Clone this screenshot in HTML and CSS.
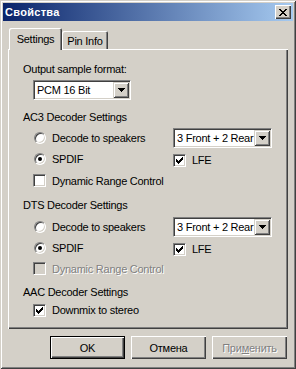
FILE: index.html
```html
<!DOCTYPE html>
<html lang="ru">
<head>
<meta charset="UTF-8">
<meta name="viewport" content="width=device-width, initial-scale=1.0">
<title>Свойства</title>
<link rel="stylesheet" href="styles.css">
</head>
<body>
<div class="window">
  <div class="titlebar">
    <span class="title">Свойства</span>
    <span class="close-btn">
      <svg width="8" height="7" viewBox="0 0 8 7" shape-rendering="crispEdges"><path fill="#000" d="M0 0h2v1H0zM6 0h2v1H6zM1 1h2v1H1zM5 1h2v1H5zM2 2h4v1H2zM3 3h2v1H3zM2 4h4v1H2zM1 5h2v1H1zM5 5h2v1H5zM0 6h2v1H0zM6 6h2v1H6z"/></svg>
    </span>
  </div>
  <div class="client">
    <div class="tabs">
      <div class="tab tab-active">Settings</div>
      <div class="tab tab-pin">Pin Info</div>
    </div>
    <div class="panel">
      <div class="label">Output sample format:</div>
      <div class="combo combo-pcm">
        <span class="combo-text">PCM 16 Bit</span>
        <span class="combo-btn"><svg width="7" height="4" viewBox="0 0 7 4" shape-rendering="crispEdges"><path fill="#000" d="M0 0h7v1H0zM1 1h5v1H1zM2 2h3v1H2zM3 3h1v1H3z"/></svg></span>
      </div>

      <div class="label group-ac3">AC3 Decoder Settings</div>
      <div class="row row-first">
        <div class="opt"><span class="radio"></span>Decode to speakers</div>
        <div class="combo combo-spk">
          <span class="combo-text">3 Front + 2 Rear</span>
          <span class="combo-btn"><svg width="7" height="4" viewBox="0 0 7 4" shape-rendering="crispEdges"><path fill="#000" d="M0 0h7v1H0zM1 1h5v1H1zM2 2h3v1H2zM3 3h1v1H3z"/></svg></span>
        </div>
      </div>
      <div class="row">
        <div class="opt"><span class="radio"><span class="dot"></span></span>SPDIF</div>
        <div class="opt opt-lfe"><span class="check"><svg width="7" height="7" viewBox="0 0 7 7" shape-rendering="crispEdges"><path fill="#000" d="M0 2h1v3H0zM1 3h1v3H1zM2 4h1v3H2zM3 3h1v3H3zM4 2h1v3H4zM5 1h1v3H5zM6 0h1v3H6z"/></svg></span>LFE</div>
      </div>
      <div class="row row-drc">
        <div class="opt"><span class="check check-left"></span>Dynamic Range Control</div>
      </div>

      <div class="label group-dts">DTS Decoder Settings</div>
      <div class="row row-first-dts">
        <div class="opt"><span class="radio"></span>Decode to speakers</div>
        <div class="combo combo-spk">
          <span class="combo-text">3 Front + 2 Rear</span>
          <span class="combo-btn"><svg width="7" height="4" viewBox="0 0 7 4" shape-rendering="crispEdges"><path fill="#000" d="M0 0h7v1H0zM1 1h5v1H1zM2 2h3v1H2zM3 3h1v1H3z"/></svg></span>
        </div>
      </div>
      <div class="row">
        <div class="opt"><span class="radio"><span class="dot"></span></span>SPDIF</div>
        <div class="opt opt-lfe"><span class="check"><svg width="7" height="7" viewBox="0 0 7 7" shape-rendering="crispEdges"><path fill="#000" d="M0 2h1v3H0zM1 3h1v3H1zM2 4h1v3H2zM3 3h1v3H3zM4 2h1v3H4zM5 1h1v3H5zM6 0h1v3H6z"/></svg></span>LFE</div>
      </div>
      <div class="row">
        <div class="opt disabled"><span class="check check-left check-disabled"></span>Dynamic Range Control</div>
      </div>

      <div class="label group-aac">AAC Decoder Settings</div>
      <div class="row row-aac">
        <div class="opt"><span class="check check-left"><svg width="7" height="7" viewBox="0 0 7 7" shape-rendering="crispEdges"><path fill="#000" d="M0 2h1v3H0zM1 3h1v3H1zM2 4h1v3H2zM3 3h1v3H3zM4 2h1v3H4zM5 1h1v3H5zM6 0h1v3H6z"/></svg></span>Downmix to stereo</div>
      </div>
    </div>
    <div class="buttons">
      <div class="btn btn-default">OK</div>
      <div class="btn">Отмена</div>
      <div class="btn disabled">При<u>м</u>енить</div>
    </div>
  </div>
</div>
</body>
</html>
```

FILE: styles.css
```css
body {
  margin: 0;
  background-color: #d4d0c8;
  font-family: "Liberation Sans", Arial, sans-serif;
  font-size: 11px;
  letter-spacing: -0.25px;
  color: #000;
}
.window {
  width: 296px;
  height: 369px;
  box-sizing: border-box;
  padding: 3px;
  background-color: #d4d0c8;
  box-shadow: inset 1px 1px #d4d0c8, inset -1px -1px #404040, inset 2px 2px #fff, inset -2px -2px #808080;
}
.titlebar {
  height: 18px;
  display: flex;
  align-items: center;
  justify-content: space-between;
  padding: 0 2px;
  background: linear-gradient(to right, #0a246a, #a6caf0);
}
.title {
  color: white;
  font-weight: bold;
  font-size: 11px;
  letter-spacing: 0.3px;
}
.close-btn {
  width: 16px;
  height: 14px;
  box-sizing: border-box;
  display: flex;
  align-items: center;
  justify-content: center;
  background-color: #d4d0c8;
  box-shadow: inset 1px 1px #fff, inset -1px -1px #404040, inset -2px -2px #808080;
}
.client {
  padding: 7px 5px 0 5px;
}
.tabs {
  display: flex;
  align-items: flex-end;
  height: 21px;
  padding-left: 1px;
  position: relative;
  z-index: 1;
}
.tab {
  width: 46px;
  height: 18px;
  box-sizing: border-box;
  padding-top: 3px;
  line-height: 14px;
  text-align: center;
  background-color: #d4d0c8;
  border-radius: 2px 2px 0 0;
  box-shadow: inset 1px 1px #fff, inset -1px 0 #404040, inset -2px 0 #808080;
}
.tab-active {
  width: 53px;
  height: 22px;
  padding-top: 4px;
  margin-bottom: -1px;
}
.panel {
  height: 280px;
  box-sizing: border-box;
  padding: 13px 0 0 15px;
  display: flex;
  flex-direction: column;
  box-shadow: inset 1px 1px #fff, inset -1px -1px #404040, inset -2px -2px #808080;
}
.label {
  height: 14px;
  line-height: 14px;
  white-space: nowrap;
}
.group-ac3 {
  margin-top: 10px;
}
.group-dts {
  margin-top: 7px;
}
.group-aac {
  margin-top: 6px;
}
.row {
  height: 21px;
  display: flex;
  align-items: center;
}
.row-first {
  margin-top: 3px;
}
.row-first-dts {
  margin-top: 4px;
}
.row-drc {
  margin-top: 1px;
}
.row-aac {
  height: 20px;
  margin-top: 1px;
}
.opt {
  width: 150px;
  display: flex;
  align-items: center;
  white-space: nowrap;
}
.opt-lfe {
  width: auto;
  margin-top: 3px;
}
.radio {
  width: 12px;
  height: 12px;
  box-sizing: border-box;
  margin: 0 6px 0 11px;
  border-radius: 50%;
  border: 1px solid;
  border-color: #808080 #fff #fff #808080;
  box-shadow: inset 1px 1px #404040, inset -1px -1px #d4d0c8;
  background-color: #fff;
  display: flex;
  align-items: center;
  justify-content: center;
}
.dot {
  width: 4px;
  height: 4px;
  border-radius: 50%;
  background-color: #000;
}
.check {
  width: 13px;
  height: 13px;
  box-sizing: border-box;
  margin-right: 6px;
  border: 1px solid;
  border-color: #808080 #fff #fff #808080;
  box-shadow: inset 1px 1px #404040, inset -1px -1px #d4d0c8;
  background-color: #fff;
  display: flex;
  align-items: center;
  justify-content: center;
}
.check-left {
  margin-left: 10px;
}
.check-disabled {
  background-color: #d4d0c8;
}
.disabled {
  color: #808080;
  text-shadow: 1px 1px #fff;
}
.combo {
  height: 20px;
  box-sizing: border-box;
  display: flex;
  padding: 1px;
  border: 1px solid;
  border-color: #808080 #fff #fff #808080;
  box-shadow: inset 1px 1px #404040, inset -1px -1px #d4d0c8;
  background-color: #fff;
}
.combo-pcm {
  width: 98px;
  margin: 4px 0 0 10px;
}
.combo-spk {
  width: 99px;
}
.combo-text {
  flex: 1;
  overflow: hidden;
  white-space: nowrap;
  padding-left: 2px;
  line-height: 16px;
}
.combo-btn {
  width: 16px;
  height: 16px;
  box-sizing: border-box;
  display: flex;
  align-items: center;
  justify-content: center;
  background-color: #d4d0c8;
  box-shadow: inset 1px 1px #d4d0c8, inset -1px -1px #404040, inset 2px 2px #fff, inset -2px -2px #808080;
}
.buttons {
  display: flex;
  justify-content: flex-end;
  gap: 6px;
  margin-top: 7px;
  padding-right: 1px;
}
.btn {
  width: 75px;
  height: 23px;
  box-sizing: border-box;
  display: flex;
  align-items: center;
  justify-content: center;
  background-color: #d4d0c8;
  box-shadow: inset 1px 1px #fff, inset -1px -1px #404040, inset -2px -2px #808080;
}
.btn-default {
  border: 1px solid #000;
}
.btn u {
  text-decoration: underline;
}
```
